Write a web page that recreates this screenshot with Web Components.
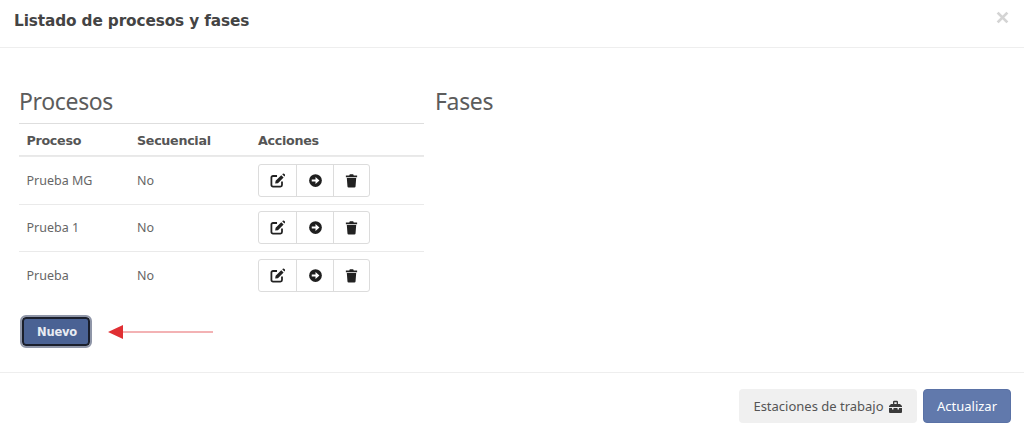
<!DOCTYPE html>
<html lang="es"><head><meta charset="utf-8"><style>
html,body{margin:0;padding:0;background:#fff}
body{width:1024px;height:436px;overflow:hidden;font-family:"Noto Sans","Open Sans",sans-serif;color:#555}
</style></head><body>
<template id="t-modal"><style>
:host{display:flex;flex-direction:column;height:436px;box-sizing:border-box}
header{height:47px;box-sizing:border-box;display:flex;align-items:center;justify-content:space-between;padding:0 15px 5px 14px}
.rule{height:1px;background:#eeeeee;flex:none}
h1{margin:0;font:bold 15.3px/20px "DejaVu Sans",sans-serif;color:#444;letter-spacing:-.12px}
.x{width:13px;height:13px;display:block;margin-top:-7px}
main{height:324px;box-sizing:border-box;padding:39px 19px 0 19px;display:grid;grid-template-columns:405px 1fr;column-gap:11px}
footer{flex:1;display:flex;justify-content:flex-end;align-items:flex-start;gap:6px;padding:16px 13px 0 0}
</style>
<header><h1><slot name="title"></slot></h1>
<svg class="x" viewBox="0 0 12 12"><path d="M1.5 1.5l9 9M10.500 1.500l-9 9" stroke="#d4d4d4" stroke-width="2.6"/></svg></header>
<div class="rule"></div>
<main><slot></slot></main>
<div class="rule"></div>
<footer><slot name="footer"></slot></footer></template>

<template id="t-section"><style>
:host{display:block}
h2{margin:0;height:36px;font:400 23px/28px "Noto Sans",sans-serif;color:#5c5c5c;letter-spacing:-.35px}
</style><h2><slot name="heading"></slot></h2><slot></slot></template>

<template id="t-row"><style>
:host{display:grid;grid-template-columns:110.500px 121px 1fr;align-items:center;box-sizing:border-box;border-top:1px solid #eaeaea;font:12.500px/16px "Noto Sans",sans-serif;color:#666;padding-left:7.500px}
:host([head]){border-top-color:#dedede;font:bold 12.700px/16px "DejaVu Sans",sans-serif;color:#555;letter-spacing:-.3px;border-bottom:1px solid #e8e8e8;height:33px;padding-top:2px}
::slotted(*){display:block}
</style><slot></slot></template>

<template id="t-group"><style>
:host{display:inline-flex;height:33px;box-sizing:border-box;border:1px solid #dcdcdc;border-radius:3px;background:#fff;vertical-align:top}
span{display:flex;align-items:center;justify-content:center;height:100%}
span+span{border-left:1px solid #dcdcdc}
span:nth-of-type(1){width:37px}span:nth-of-type(2){width:36px}span:nth-of-type(3){width:35px}
svg{width:15px;height:15px;display:block}
</style>
<span><svg viewBox="0 0 16 16"><path d="M7.500 3.200H3.200A1.700 1.700 0 0 0 1.500 4.900v7.900a1.700 1.700 0 0 0 1.700 1.700h7.900a1.700 1.700 0 0 0 1.700-1.700V9" fill="none" stroke="#222" stroke-width="1.900"/><path d="M6 8.300 12 2.300l2.500 2.500-6 6-3 .5zM13 1.300l.7-.6a1 1 0 0 1 1.300 0l1 1a1 1 0 0 1 0 1.300l-.7.7z" fill="#222"/></svg></span>
<span><svg viewBox="0 0 16 16"><circle cx="8" cy="8" r="6.800" fill="#1f1f1f"/><path d="M4 6.900h4V4.200L12.200 8 8 11.800V9.100H4z" fill="#fff"/></svg></span>
<span><svg viewBox="0 0 16 16"><path d="M2 2.600h3.600L6.200 1.400h3.600l.6 1.200H14V4.400H2zM3 5.400h10l-.7 9a1.200 1.200 0 0 1-1.200 1.100H4.900a1.200 1.200 0 0 1-1.200-1.100z" fill="#222"/></svg></span></template>

<template id="t-btn"><style>
:host{display:inline-flex;align-items:center;justify-content:center;box-sizing:border-box;border-radius:4px;font:13px/16px "Noto Sans",sans-serif;height:34px}
:host([kind=light]){background:#f0f0f0;color:#555;width:178px;gap:4px}
:host([kind=primary]){background:#6179ac;color:#fff;width:88px;border:1px solid #5a72a6}
:host([kind=focus]){background:#4a6294;color:#e8ebf2;width:68px;height:29px;border:2px solid #1a1f2c;border-radius:4px;outline:2px solid #8f96a8;font:bold 11.500px/16px "DejaVu Sans",sans-serif;letter-spacing:-.2px;padding-left:2px}
</style><slot></slot></template>

<template id="t-arrow"><style>
:host{display:block;width:106px;height:16px}svg{display:block}
</style><svg width="106" height="16" viewBox="0 0 106 16"><path d="M14 8H105" stroke="#e8666a" stroke-width="1.200"/><path d="M0 8 15 1V15z" fill="#e02f33"/></svg></template>

<x-modal>
<span slot="title">Listado de procesos y fases</span>
<div style="display:contents">
<x-section>
<span slot="heading">Procesos</span>
<x-row head><span>Proceso</span><span>Secuencial</span><span>Acciones</span></x-row>
<x-row style="height:48px"><span>Prueba MG</span><span>No</span><span><x-group></x-group></span></x-row>
<x-row style="height:47px;padding-bottom:1px"><span>Prueba 1</span><span>No</span><span><x-group></x-group></span></x-row>
<x-row style="height:48px"><span>Prueba</span><span>No</span><span><x-group></x-group></span></x-row>
<div style="display:flex;align-items:center;gap:18px;padding:18px 0 0 3px">
<x-btn kind="focus">Nuevo</x-btn><x-arrow></x-arrow>
</div>
</x-section>
<x-section><span slot="heading">Fases</span></x-section>
</div>
<x-btn slot="footer" kind="light">Estaciones de trabajo
<svg width="15" height="13" viewBox="0 0 15 13"><path d="M1 6 3 4h2V2a1.200 1.200 0 0 1 1.200-1.200h2.600A1.200 1.200 0 0 1 10 2v2h2l2 2v1H1zM6.300 2.200V4h2.400V2.200zM1 8h3v1.500h1.500V8h4v1.500H11V8h3v4a1 1 0 0 1-1 1H2a1 1 0 0 1-1-1z" fill="#3a3a3a"/></svg></x-btn>
<x-btn slot="footer" kind="primary">Actualizar</x-btn>
</x-modal>
<script>
for(const [tag,id] of [['x-modal','t-modal'],['x-section','t-section'],['x-row','t-row'],['x-group','t-group'],['x-btn','t-btn'],['x-arrow','t-arrow']]){
customElements.define(tag,class extends HTMLElement{constructor(){super();this.attachShadow({mode:'open'}).appendChild(document.getElementById(id).content.cloneNode(true));}});
}
</script>
</body></html>
